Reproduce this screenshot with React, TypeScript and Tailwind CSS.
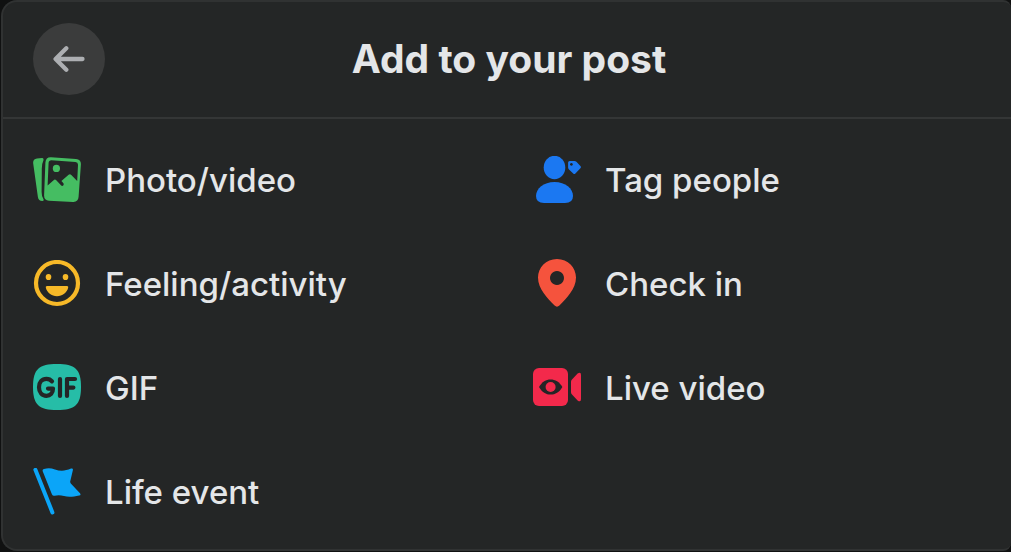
import React from 'react';

function PhotoIcon() {
  return (
    <svg viewBox="0 0 48 48" className="w-12 h-12" aria-hidden="true">
      <path d="M4 2.5 L9 2 Q11 2 10.4 4.5 Q8.6 8 8.8 14 L8.6 36 Q8.6 41 10.6 43.6 Q11 45 9.4 45 Q5.4 45 4.9 41 L0.2 7.4 Q-0.3 3 4 2.5 Z" fill="#45bd62" />
      <path
        fillRule="evenodd"
        d="M18 1.2 L43 3 Q48.3 3.5 47.9 8.6 L45.6 40.8 Q45.2 46.2 40 45.9 L16 44.8 Q11 44.4 11.1 39.4 L12.4 6.4 Q12.8 1 18 1.2 Z M18.4 4.2 Q15.8 4.2 15.6 6.8 L14.6 29.5 L20.6 24.2 Q22 23 23.3 24.3 L28.2 29.6 Q29.4 30.6 30.4 29.2 Q31.2 28 29.8 26.6 L28.4 25 L35.6 18.7 Q37 17.6 38.3 18.9 L44.2 25 L45 9 Q45.2 6.2 42.4 5.9 Z"
        fill="#45bd62"
      />
      <circle cx="23.4" cy="12.4" r="3.6" fill="#45bd62" />
    </svg>
  );
}

function TagIcon() {
  return (
    <svg viewBox="0 0 48 48" className="w-12 h-12" fill="#1b78f2" aria-hidden="true">
      <ellipse cx="21.5" cy="11.5" rx="10.8" ry="11.7" />
      <path d="M21.5 26 C10.5 26 3 32.5 3 40 Q3 47 11 47 L32 47 Q40 47 40 40 C40 32.5 32.5 26 21.5 26 Z" />
      <path
        fillRule="evenodd"
        d="M36.6 5 L41.4 5 Q42.6 5 43.4 5.8 L47.4 10 Q48.4 11.2 47.4 12.3 L42.4 17.4 Q41.3 18.4 40.2 17.4 L36 13.4 Q35.1 12.6 35.1 11.4 L35.1 6.5 Q35.1 5 36.6 5 Z M38.4 7 a1.4 1.4 0 1 0 0.01 0 Z"
      />
    </svg>
  );
}

function SmileIcon() {
  return (
    <svg viewBox="0 0 48 48" className="w-12 h-12" fill="#f7b928" aria-hidden="true">
      <circle cx="24" cy="23" r="21" fill="none" stroke="#f7b928" strokeWidth="4.2" />
      <ellipse cx="15.5" cy="17" rx="2.8" ry="3.1" />
      <ellipse cx="32.5" cy="17" rx="2.8" ry="3.1" />
      <path d="M14 26 L34 26 Q35.6 26 35.2 27.6 C34 33 29.5 36.2 24 36.2 C18.5 36.2 14 33 12.8 27.6 Q12.4 26 14 26 Z" />
    </svg>
  );
}

function PinIcon() {
  return (
    <svg viewBox="0 0 48 48" className="w-12 h-12 overflow-visible" aria-hidden="true">
      <path
        fillRule="evenodd"
        d="M24 -1 C13 -1 5 7.5 5 17.6 C5 29 14.5 38.5 21.6 45.6 Q24 47.8 26.4 45.6 C33.5 38.5 43 29 43 17.6 C43 7.5 35 -1 24 -1 Z M24 11 a7 7 0 1 1 -0.01 0 Z"
        fill="#f5533d"
      />
    </svg>
  );
}

function GifIcon() {
  return (
    <svg viewBox="0 0 48 48" className="w-12 h-12" aria-hidden="true">
      <path d="M24 0 C42 0 48 5 48 23 C48 41 42 46 24 46 C6 46 0 41 0 23 C0 5 6 0 24 0 Z" fill="#26bda7" />
      <g fill="none" stroke="#242526" strokeWidth="4.2" strokeLinecap="round" strokeLinejoin="round">
        <path d="M19 17.4 C17.6 15.6 15.6 14.8 13.4 14.8 C9 14.8 6 18.4 6 23.2 C6 28.2 9 31.8 13.4 31.8 C17.4 31.8 20 29 20 24.6 L15 24.6" />
        <path d="M27 15 V32" />
        <path d="M42 15 H34 V32 M34 23.6 H40.4" />
      </g>
    </svg>
  );
}

function LiveIcon() {
  return (
    <svg viewBox="0 0 48 48" className="w-12 h-12" fill="#f3294b" aria-hidden="true">
      <rect x="0" y="4" width="35" height="38" rx="6" />
      <path d="M6 23 C9 18 13 15.6 17.6 15.6 C22.2 15.6 26.4 18 29.4 23 C26.4 28.2 22.2 30.6 17.6 30.6 C13 30.6 9 28.2 6 23 Z" fill="#242526" />
      <circle cx="17.6" cy="23" r="5" />
      <path d="M38 17.8 Q38 16.4 39 15.4 L44.6 9.6 Q48 7.4 48 11 L48 35 Q48 38.6 44.6 36.4 L39 30.6 Q38 29.6 38 28.2 Z" />
    </svg>
  );
}

function FlagIcon() {
  return (
    <svg viewBox="0 0 48 48" className="w-12 h-12" aria-hidden="true">
      <path d="M2.4 1.8 L19.4 44.4" stroke="#0ba5f8" strokeWidth="4" strokeLinecap="round" />
      <path
        d="M9.8 3.4 Q9 1.6 11 1 C14.6 -0.2 18 0 22 1.4 C27 3.2 32 3.2 38 0.6 Q40.4 -0.2 39.8 2.4 L37.2 13.4 Q37 14.6 37.8 15.4 L47 25.2 Q48.4 27 46.2 27.4 C40 29 35 29.2 31 28 C27.6 27 24.6 26.8 21.6 27.8 Q19.8 28.2 19 26.4 Z"
        fill="#0ba5f8"
      />
    </svg>
  );
}

const options = [
  { label: 'Photo/video', Icon: PhotoIcon },
  { label: 'Tag people', Icon: TagIcon },
  { label: 'Feeling/activity', Icon: SmileIcon },
  { label: 'Check in', Icon: PinIcon },
  { label: 'GIF', Icon: GifIcon },
  { label: 'Live video', Icon: LiveIcon },
  { label: 'Life event', Icon: FlagIcon },
];

export default function App() {
  return (
    <main className="bg-[#101111] pl-px pb-px font-['Inter','Liberation_Sans',sans-serif] text-[#e4e6e8]">
      <section className="rounded-l-2xl rounded-r-lg border-2 border-r-0 border-[#303232] bg-[#242626]">
        <header className="grid grid-cols-[72px_1fr_68px] items-center border-b-2 border-[#343636] px-[30px] pt-[21px] pb-[22px]">
          <button
            type="button"
            aria-label="Back"
            className="flex h-[72px] w-[72px] items-center justify-center rounded-full bg-[#3b3c3c]"
          >
            <svg
              viewBox="0 0 32 32"
              className="h-8 w-8"
              fill="none"
              stroke="#adafb2"
              strokeWidth="4.3"
              strokeLinecap="round"
              strokeLinejoin="round"
              aria-hidden="true"
            >
              <path d="M29.5 16 H3 M13.3 5.2 L2.6 16 L13.3 26.8" />
            </svg>
          </button>
          <h1 className="text-center text-[39px] leading-[48px] font-bold">Add to your post</h1>
        </header>

        <div className="grid grid-cols-2 pt-[9px] pr-[5px] pb-[5px] pl-[3px]">
          {options.map(({ label, Icon }) => (
            <button key={label} type="button" className="flex items-center gap-6 px-[27px] py-7 text-left">
              <Icon />
              <span className="text-[33px] leading-[48px] font-medium">{label}</span>
            </button>
          ))}
        </div>
      </section>
    </main>
  );
}
